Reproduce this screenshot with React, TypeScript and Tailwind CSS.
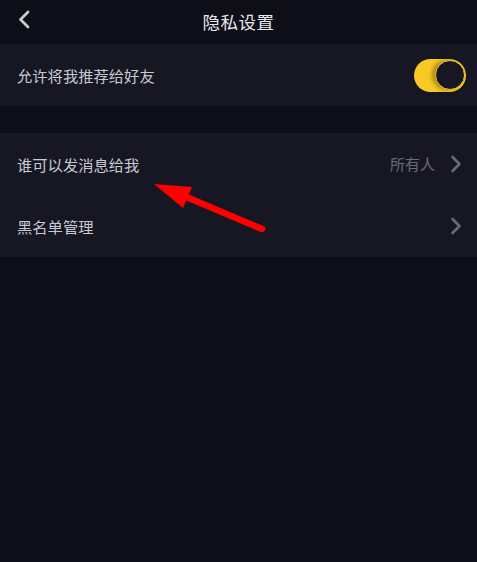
import React from "react";

const font = { fontFamily: '"Noto Sans CJK SC", "Noto Sans", sans-serif' };

function ChevronRight() {
  return (
    <svg width="12" height="18" viewBox="0 0 12 18" fill="none">
      <path d="M2.5 2 L9.5 9 L2.5 16" stroke="#6a6c74" strokeWidth="2.6" strokeLinecap="round" strokeLinejoin="round" />
    </svg>
  );
}

export default function App() {
  return (
    <div className="relative w-[477px] h-[562px] bg-[#0e0e18] overflow-hidden" style={font}>
      <div className="relative h-[44px] flex items-center justify-center">
        <svg className="absolute left-[17px] top-[10px]" width="14" height="20" viewBox="0 0 14 20" fill="none">
          <path d="M11 2 L3.5 9.5 L11 17" stroke="#c9cad0" strokeWidth="2.8" strokeLinecap="round" strokeLinejoin="round" />
        </svg>
        <span className="text-[17.5px] text-[#e8e8ec] tracking-[0.5px]">隐私设置</span>
      </div>

      <div className="h-[62px] bg-[#161722] flex items-center justify-between pl-[17px] pr-[11px]">
        <span className="text-[15.3px] text-[#c9cad0]">允许将我推荐给好友</span>
        <div className="w-[52px] h-[33px] rounded-full bg-[#f9c925] relative">
          <div className="absolute right-[1px] top-[1.5px] w-[30px] h-[30px] rounded-full bg-[#161722] border-[1.5px] border-[#f9c925] shadow-[-3px_0_4px_rgba(0,0,0,0.35)]" />
        </div>
      </div>

      <div className="h-[27px]" />

      <div className="bg-[#161722]">
        <div className="h-[62px] flex items-center justify-between pl-[17px] pr-[15px]">
          <span className="text-[15.3px] text-[#c9cad0]">谁可以发消息给我</span>
          <div className="flex items-center gap-[15px]">
            <span className="text-[15px] text-[#6a6c74]">所有人</span>
            <ChevronRight />
          </div>
        </div>
        <div className="h-[62px] flex items-center justify-between pl-[17px] pr-[15px]">
          <span className="text-[15.3px] text-[#c9cad0]">黑名单管理</span>
          <ChevronRight />
        </div>
      </div>

      <svg className="absolute left-0 top-0 pointer-events-none" width="477" height="562" viewBox="0 0 477 562">
        <line x1="184" y1="196" x2="262" y2="229" stroke="#ff0000" strokeWidth="6.5" strokeLinecap="round" />
        <polygon points="154,184 192,187 183,208" fill="#ff0000" />
      </svg>
    </div>
  );
}
